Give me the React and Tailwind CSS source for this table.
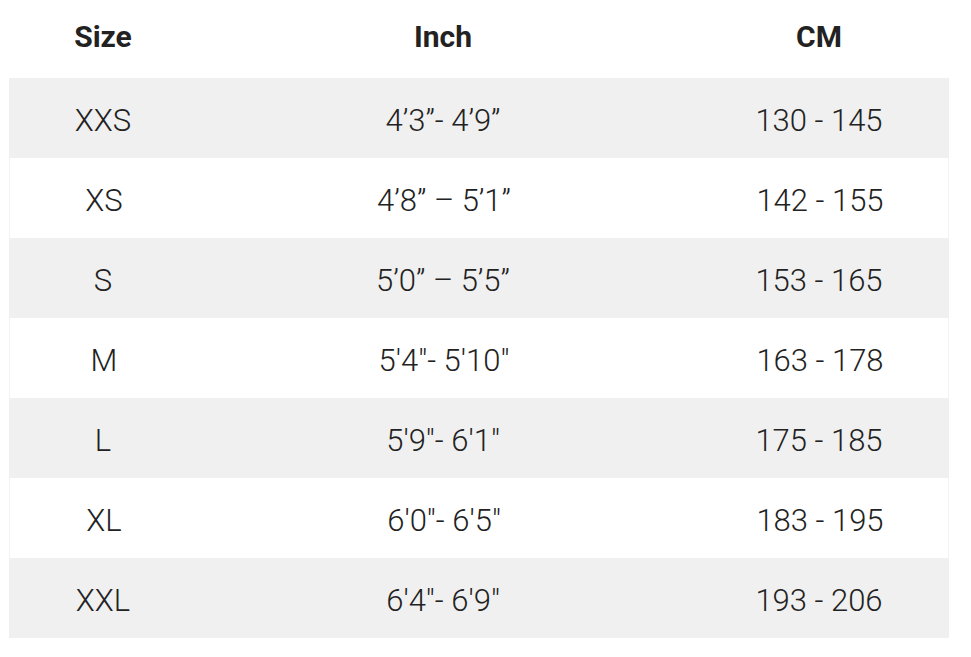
import React from 'react';

const rows = [
    ['XXS', '4’3”- 4’9”', '130 - 145'],
    ['XS', '4’8” – 5’1”', '142 - 155'],
    ['S', '5’0” – 5’5”', '153 - 165'],
    ['M', '5\'4"- 5\'10"', '163 - 178'],
    ['L', '5\'9"- 6\'1"', '175 - 185'],
    ['XL', '6\'0"- 6\'5"', '183 - 195'],
    ['XXL', '6\'4"- 6\'9"', '193 - 206'],
];

export default function App() {
    return (
        <div className="w-[971px] h-[657px] bg-white pl-[9px] text-[#222]" style={{ fontFamily: 'Roboto, "Liberation Sans", sans-serif' }}>
            {/* Header */}
            <div className="w-[940px] grid grid-cols-[188px_492px_260px] h-[78px] items-center text-center text-[30px] font-bold pb-[6px]">
                <div>Size</div>
                <div>Inch</div>
                <div>CM</div>
            </div>

            {rows.map((row, i) => (
                <div
                    key={row[0]}
                    className={`w-[940px] grid grid-cols-[188px_492px_260px] h-[80px] items-center text-center text-[31px] font-light pt-[6px] ${i % 2 === 0 ? 'bg-[#f0f0f0]' : 'bg-white border-x border-[#f3f3f3]'}`}
                >
                    <div>{row[0]}</div>
                    <div>{row[1]}</div>
                    <div>{row[2]}</div>
                </div>
            ))}
        </div>
    );
}
